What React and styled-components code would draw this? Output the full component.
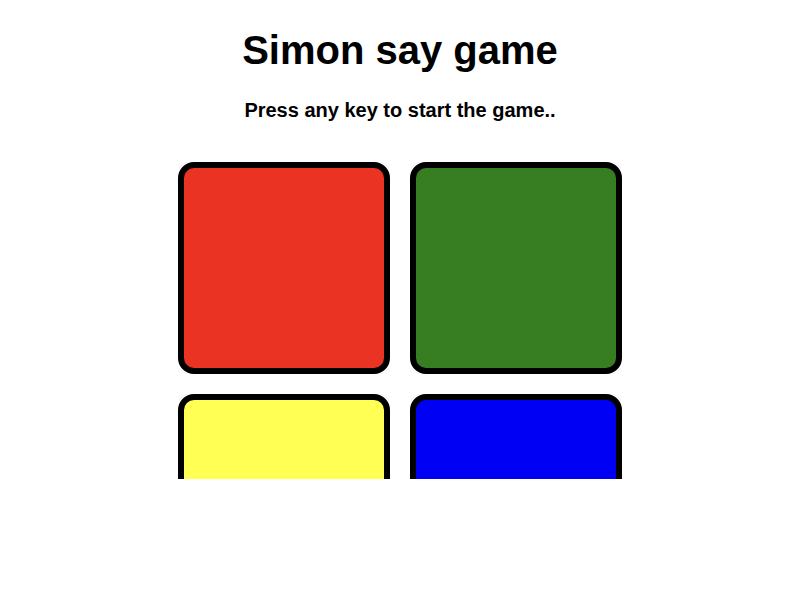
import React from "react";
import styled, { createGlobalStyle } from "styled-components";

const Global = createGlobalStyle`
  html, body {
    margin: 0;
    padding: 0;
    background: #ffffff;
    font-family: "Liberation Sans", Arial, sans-serif;
    color: #000;
  }
`;

const Page = styled.main`
  display: flex;
  flex-direction: column;
  align-items: center;
  text-align: center;
`;

const Title = styled.h1`
  margin: 28px 0 0;
  font-size: 40px;
  font-weight: 700;
  line-height: normal;
`;

const Subtitle = styled.h3`
  margin: 26px 0 0;
  font-size: 20px;
  font-weight: 700;
  line-height: normal;
`;

const BoardWindow = styled.div`
  margin-top: 40px;
  height: 317px;
  overflow: hidden;
`;

const Board = styled.div`
  display: grid;
  grid-template-columns: repeat(2, 212px);
  gap: 20px;
`;

const Pad = styled.div`
  box-sizing: border-box;
  width: 212px;
  height: 212px;
  border: 6px solid #000;
  border-radius: 16px;
  background: ${(p) => p.$color};
`;

const pads = [
  { id: "red", color: "#EA3323" },
  { id: "green", color: "#377D22" },
  { id: "yellow", color: "#FFFF54" },
  { id: "blue", color: "#0000F5" },
];

export default function App() {
  return (
    <>
      <Global />
      <Page>
        <Title>Simon say game</Title>
        <Subtitle>Press any key to start the game..</Subtitle>
        <BoardWindow>
          <Board>
            {pads.map((p) => (
              <Pad key={p.id} $color={p.color} />
            ))}
          </Board>
        </BoardWindow>
      </Page>
    </>
  );
}
